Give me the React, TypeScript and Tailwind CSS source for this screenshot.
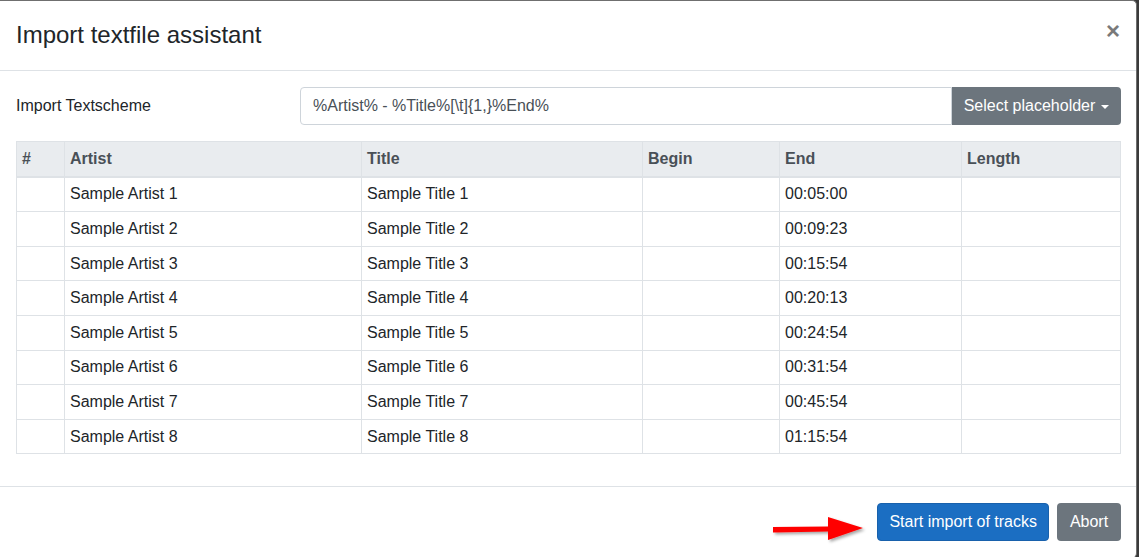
import React from 'react';

const ROWS = [
  ['Sample Artist 1', 'Sample Title 1', '00:05:00'],
  ['Sample Artist 2', 'Sample Title 2', '00:09:23'],
  ['Sample Artist 3', 'Sample Title 3', '00:15:54'],
  ['Sample Artist 4', 'Sample Title 4', '00:20:13'],
  ['Sample Artist 5', 'Sample Title 5', '00:24:54'],
  ['Sample Artist 6', 'Sample Title 6', '00:31:54'],
  ['Sample Artist 7', 'Sample Title 7', '00:45:54'],
  ['Sample Artist 8', 'Sample Title 8', '01:15:54'],
];

const td = 'border border-[#dee2e6] px-[5px] py-[4.8px] align-top';
const th = 'border border-[#dee2e6] border-b-2 px-[5px] py-[4.8px] text-left font-bold text-[#495057]';

const Arrow = () => (
  <svg width="100" height="34" viewBox="0 0 100 34" className="mr-[3px] mt-[9px]">
    <defs>
      <filter id="sh" x="-10%" y="-30%" width="130%" height="170%">
        <feDropShadow dx="2" dy="2" stdDeviation="1.5" floodColor="#000" floodOpacity="0.35" />
      </filter>
    </defs>
    <g filter="url(#sh)">
      <path d="M3 15 L58 14.5 L58 5 L93 16 L58 28 L58 19.5 L3 20.5 Z" fill="#ff0000" />
    </g>
  </svg>
);

export default function App() {
  return (
    <div className="h-[557px] w-[1139px] overflow-hidden bg-[#3a3a3a] font-['Liberation_Sans',Arial,sans-serif] text-[16px] text-[#212529]">
      <div className="flex h-[558px] w-[1137px] flex-col rounded-r-[5px] border-t border-r border-[#6f6f6f] bg-white">
        {/* Header */}
        <div className="flex h-[70px] items-start justify-between border-b border-[#dee2e6] pl-4 pr-[15px] pt-[16px] pb-[16px]">
          <h4 className="text-[24px] leading-[36px] font-normal">Import textfile assistant</h4>
          <button className="mt-[2px] mr-[1px] text-[24px] font-bold leading-[24px] text-[#7a7a7a]">×</button>
        </div>

        {/* Body */}
        <div className="pt-4 pb-4 pl-4 pr-[15px]">
          <div className="flex items-center">
            <label className="w-[284px] leading-[24px]">Import Textscheme</label>
            <div className="flex flex-1">
              <input
                readOnly
                value="%Artist% - %Title%[\t]{1,}%End%"
                className="h-[38px] flex-1 rounded-l-[4px] border border-[#ced4da] px-[12px] text-[16px] text-[#495057] outline-none"
              />
              <button className="flex h-[38px] w-[169px] items-center justify-center gap-[6px] rounded-r-[4px] bg-[#6c757d] text-white">
                Select placeholder
                <span className="mt-[2px] h-0 w-0 border-x-[4px] border-t-[4px] border-x-transparent border-t-white" />
              </button>
            </div>
          </div>

          <table className="mt-4 mb-4 w-full border-collapse leading-[24px]">
            <thead>
              <tr className="bg-[#e9ecef]">
                <th className={`${th} w-[48px]`}>#</th>
                <th className={`${th} w-[297px]`}>Artist</th>
                <th className={`${th} w-[281px]`}>Title</th>
                <th className={`${th} w-[137px]`}>Begin</th>
                <th className={`${th} w-[182px]`}>End</th>
                <th className={th}>Length</th>
              </tr>
            </thead>
            <tbody>
              {ROWS.map(([artist, title, end]) => (
                <tr key={artist}>
                  <td className={td}></td>
                  <td className={td}>{artist}</td>
                  <td className={td}>{title}</td>
                  <td className={td}></td>
                  <td className={td}>{end}</td>
                  <td className={td}></td>
                </tr>
              ))}
            </tbody>
          </table>
        </div>

        {/* Footer */}
        <div className="flex items-start justify-end border-t border-[#dee2e6] pl-[12px] pr-[11px] pt-[16px]">
          <Arrow />
          <button className="mx-[4px] h-[38px] rounded-[4px] border border-[#1861ac] bg-[#1b6ec2] px-[11px] text-white">
            Start import of tracks
          </button>
          <button className="mx-[4px] h-[38px] w-[64px] rounded-[4px] bg-[#6c757d] text-white">Abort</button>
        </div>
      </div>
    </div>
  );
}
